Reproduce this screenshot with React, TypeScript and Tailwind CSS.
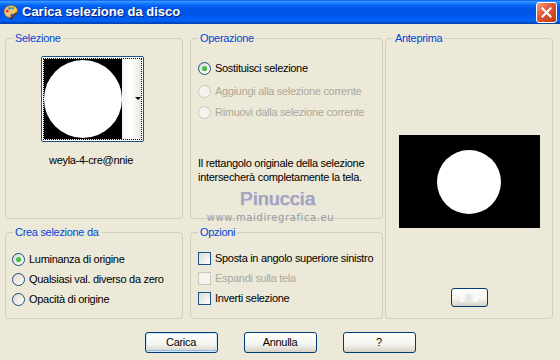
import React from "react";

const font = { fontFamily: '"Liberation Sans", Arial, sans-serif' };

function Radio({ checked, disabled, label }: { checked?: boolean; disabled?: boolean; label: string }) {
  return (
    <div className="flex items-center h-[20px] whitespace-nowrap">
      <span
        className={
          "w-[13px] h-[13px] rounded-full border flex items-center justify-center shrink-0 " +
          (disabled
            ? "border-[#cac8bb] bg-[#f4f3ee]"
            : "border-[#1c5180] bg-[linear-gradient(135deg,#dcd9cd,#ffffff)]")
        }
      >
        {checked && (
          <span className="w-[5px] h-[5px] rounded-full bg-[radial-gradient(circle_at_35%_35%,#55d35a,#21a121)]" />
        )}
      </span>
      <span className={"ml-[4px] " + (disabled ? "text-[#aca899]" : "text-black")}>{label}</span>
    </div>
  );
}

function Check({ disabled, label }: { disabled?: boolean; label: string }) {
  return (
    <div className="flex items-center h-[20px] whitespace-nowrap">
      <span
        className={
          "w-[13px] h-[13px] border shrink-0 " +
          (disabled
            ? "border-[#cac8bb] bg-[#f4f3ee]"
            : "border-[#1c5180] bg-[linear-gradient(135deg,#dcd9cd,#ffffff)]")
        }
      />
      <span className={"ml-[4px] " + (disabled ? "text-[#aca899]" : "text-black")}>{label}</span>
    </div>
  );
}

function Group({ title, className, children }: { title: string; className: string; children?: React.ReactNode }) {
  return (
    <div className={"relative border border-[#d0d0bf] rounded-[4px] " + className}>
      <span className="absolute -top-[8px] left-[7px] px-[2px] bg-[#ece9d8] text-[#0046d5] leading-[14px] whitespace-nowrap">
        {title}
      </span>
      {children}
    </div>
  );
}

function XpButton({ label, className, def }: { label: React.ReactNode; className: string; def?: boolean }) {
  return (
    <button
      className={
        "rounded-[3px] border border-[#003c74] bg-[linear-gradient(to_bottom,#ffffff,#f3f3ef_60%,#d6d0c5)] text-black flex items-center justify-center " +
        className +
        (def ? " shadow-[inset_0_0_0_1px_#cee7ff,inset_0_-1px_0_1px_#98b8ea]" : "")
      }
    >
      {label}
    </button>
  );
}

function PaletteIcon() {
  return (
    <svg width="16" height="16" viewBox="0 0 16 16">
      <path d="M8 1.5C3.8 1.5 1 4.2 1 7.6c0 3.3 2.6 5.9 5.6 5.9 1.4 0 1.6-.9 1.2-1.7-.4-.8 0-1.6 1-1.6h1.6c2.2 0 4.1-1.4 4.1-3.9C14.5 3.6 11.6 1.5 8 1.5z" fill="#f2c27a" stroke="#8a5a20" strokeWidth="0.8" />
      <circle cx="4.3" cy="7" r="1.3" fill="#e02020" />
      <circle cx="6.5" cy="4.3" r="1.2" fill="#2a7de1" />
      <circle cx="9.7" cy="4.2" r="1.2" fill="#2fb33a" />
      <circle cx="12" cy="6.5" r="1.1" fill="#f5e02a" />
      <path d="M13.5 8.5L8.2 15" stroke="#6b3b12" strokeWidth="1.6" />
      <path d="M8.8 14.2l-1.3 1.4" stroke="#333" strokeWidth="1.8" />
    </svg>
  );
}

export default function App() {
  return (
    <div className="w-[560px] h-[360px] bg-[#ece9d8] text-[11px] tracking-[-0.3px] flex flex-col overflow-hidden" style={font}>
      {/* title bar */}
      <div className="h-[24px] shrink-0 flex items-center pl-[3px] pr-[3px] tracking-normal bg-[linear-gradient(to_bottom,#0058ee_0%,#3d95ff_6%,#1c82ff_12%,#0466f8_22%,#0055e5_35%,#0055ea_60%,#005cf5_75%,#0462f3_85%,#0050d6_93%,#003da8_100%)]">
        <PaletteIcon />
        <span className="ml-[3px] text-white font-bold text-[13px] [text-shadow:1px_1px_#0a1e6e]">
          Carica selezione da disco
        </span>
        <div className="ml-auto w-[21px] h-[21px] rounded-[3px] border border-white bg-[linear-gradient(135deg,#f0a088,#e0552f_45%,#c23a16)] flex items-center justify-center">
          <svg width="11" height="11" viewBox="0 0 11 11">
            <path d="M1.5 1.5l8 8M9.5 1.5l-8 8" stroke="white" strokeWidth="2.2" strokeLinecap="square" />
          </svg>
        </div>
      </div>

      {/* body */}
      <div className="flex-1 flex flex-col pl-[5px] pr-[7px] pt-[14px]">
        <div className="flex h-[281px]">
          <div className="w-[178px] flex flex-col">
            <Group title="Selezione" className="h-[181px] flex flex-col items-center">
              <div className="mt-[17px] ml-[-4px] w-[103px] h-[86px] rounded-[2px] border border-[#1c5180] bg-white p-[1px] flex">
                <div className="flex-1 border border-dotted border-black flex">
                  <div className="w-[78px] h-full bg-black flex items-center justify-center">
                    <div className="w-[78px] h-[78px] rounded-full bg-white" />
                  </div>
                  <div className="flex-1 bg-[linear-gradient(to_right,#f4f4f0,#ffffff,#e8e8e0)] relative">
                    <span className="absolute right-[0px] top-[38px] w-0 h-0 border-l-[3px] border-r-[3px] border-t-[3px] border-l-transparent border-r-transparent border-t-black" />
                  </div>
                </div>
              </div>
              <div className="mt-[10px] ml-[-6px] text-black">weyla-4-cre@nnie</div>
            </Group>
            <Group title="Crea selezione da" className="mt-[13px] h-[87px] pl-[6px] pt-[16px]">
              <Radio checked label="Luminanza di origine" />
              <Radio label="Qualsiasi val. diverso da zero" />
              <Radio label="Opacità di origine" />
            </Group>
          </div>

          <div className="w-[193px] ml-[7px] flex flex-col">
            <Group title="Operazione" className="h-[181px] pl-[7px] pt-[19px]">
              <div className="flex flex-col gap-[1px]">
                <Radio checked label="Sostituisci selezione" />
                <div className="mt-[2px]">
                  <Radio disabled label="Aggiungi alla selezione corrente" />
                </div>
                <Radio disabled label="Rimuovi dalla selezione corrente" />
              </div>
              <p className="mt-[34px] text-black leading-[14px]">
                Il rettangolo originale della selezione
                <br />
                intersecherà completamente la tela.
              </p>
              <div className="absolute left-[17px] top-[150px] w-[125px] flex flex-col items-center leading-none pointer-events-none tracking-normal">
                <span className="ml-[14px] text-[19px] text-[#a4a4c2] tracking-[0.5px] [text-shadow:1px_0_#a4a4c2,1px_1px_#d6d4e0]">
                  Pinuccia
                </span>
                <span className="mt-[5px] text-[10px] text-[#9a9aa6] tracking-[0.6px]" style={{ fontFamily: '"DejaVu Sans", sans-serif' }}>
                  www.maidiregrafica.eu
                </span>
              </div>
            </Group>
            <Group title="Opzioni" className="mt-[13px] h-[87px] pl-[7px] pt-[15px]">
              <Check label="Sposta in angolo superiore sinistro" />
              <Check disabled label="Espandi sulla tela" />
              <Check label="Inverti selezione" />
            </Group>
          </div>

          <Group title="Anteprima" className="w-[168px] ml-[2px] h-[281px] pt-[96px] pb-[11px] flex flex-col items-center">
            <div className="w-[141px] h-[93px] shrink-0 bg-black flex items-center justify-center">
              <div className="w-[64px] h-[64px] rounded-full bg-white" />
            </div>
            <XpButton
              className="mt-auto w-[37px] h-[19px]"
              label={<span className="w-[16px] h-[8px] bg-[linear-gradient(to_right,#ffffff,#e4e4e4,#ffffff)]" />}
            />
          </Group>
        </div>

        <div className="mt-[13px] flex justify-center gap-[26px] pl-[2px]">
          <XpButton def className="w-[73px] h-[21px]" label="Carica" />
          <XpButton className="w-[73px] h-[21px]" label="Annulla" />
          <XpButton className="w-[73px] h-[21px]" label="?" />
        </div>
      </div>
    </div>
  );
}
